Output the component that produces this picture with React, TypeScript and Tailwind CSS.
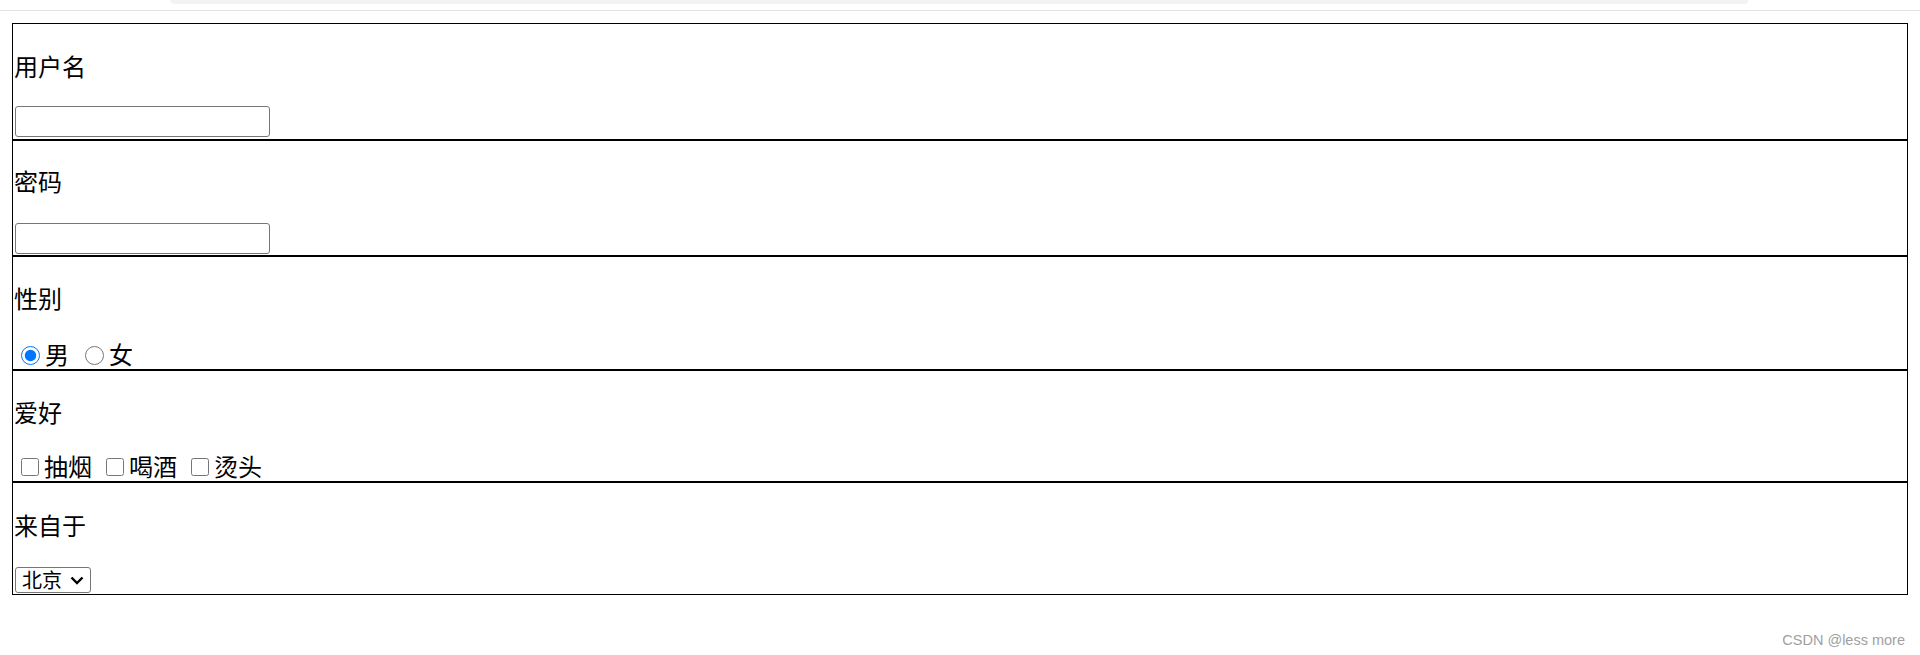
import React from "react";

const font = { fontFamily: '"Noto Sans CJK SC", "Microsoft YaHei", sans-serif' };

export default function App() {
  return (
    <div className="relative w-[1920px] h-[655px] bg-white overflow-hidden" style={font}>
      <div className="h-[11px] border-b border-[#e3e3e3] pl-[170px] pr-[172px]">
        <div className="h-[4px] bg-[#f1f3f4] rounded-b-[14px]" />
      </div>
      <div className="mt-[12px] mx-[12px] border border-black">
        <div className="flex flex-col h-[117px] border-b-2 border-black pl-[1px] pt-[26px]">
          <div className="leading-[32px] text-[24px] text-black">用户名</div>
          <input
            type="text"
            className="block mt-[24px] ml-[1px] w-[255px] h-[31px] border border-[#767676] rounded-[3px] bg-white outline-none"
          />
        </div>
        <div className="flex flex-col h-[116px] border-b-2 border-black pl-[1px] pt-[24px]">
          <div className="leading-[32px] text-[24px] text-black">密码</div>
          <input
            type="password"
            className="block mt-[26px] ml-[1px] w-[255px] h-[31px] border border-[#767676] rounded-[3px] bg-white outline-none"
          />
        </div>
        <div className="flex flex-col h-[114px] border-b-2 border-black pl-[1px] pt-[25px]">
          <div className="leading-[32px] text-[24px] text-black">性别</div>
          <div className="mt-[24px] flex items-center h-[31px] text-[24px] leading-[31px] text-black">
            <input type="radio" name="sex" defaultChecked className="w-[19px] h-[19px] ml-[7px] mr-[5px] mt-[3px] accent-[#0075ff]" />
            <span>男</span>
            <input type="radio" name="sex" className="w-[19px] h-[19px] ml-[16px] mr-[5px] mt-[3px]" />
            <span>女</span>
          </div>
        </div>
        <div className="flex flex-col h-[112px] border-b-2 border-black pl-[1px] pt-[25px]">
          <div className="leading-[32px] text-[24px] text-black">爱好</div>
          <div className="mt-[22px] flex items-center h-[31px] text-[24px] leading-[31px] text-black">
            <input type="checkbox" className="w-[18px] h-[18px] ml-[7px] mr-[5px] mt-[2px]" />
            <span>抽烟</span>
            <input type="checkbox" className="w-[18px] h-[18px] ml-[14px] mr-[5px] mt-[2px]" />
            <span>喝酒</span>
            <input type="checkbox" className="w-[18px] h-[18px] ml-[14px] mr-[5px] mt-[2px]" />
            <span>烫头</span>
          </div>
        </div>
        <div className="flex flex-col h-[111px] pl-[1px] pt-[26px]">
          <div className="leading-[32px] text-[24px] text-black">来自于</div>
          <div className="mt-[26px] ml-[1px] relative w-[76px] h-[26px]">
            <select
              defaultValue="北京"
              className="appearance-none w-[76px] h-[26px] border border-[#767676] rounded-[3px] bg-white pl-[6px] text-[20px] leading-[24px] text-black outline-none"
              style={font}
            >
              <option>北京</option>
              <option>上海</option>
              <option>广州</option>
            </select>
            <svg className="absolute right-[7px] top-[9px] pointer-events-none" width="14" height="9" viewBox="0 0 14 9">
              <path d="M1.5 1.5 L7 7 L12.5 1.5" fill="none" stroke="#000" strokeWidth="2.4" />
            </svg>
          </div>
        </div>
      </div>
      <div
        className="absolute right-[15px] top-[631px] text-[14.5px] leading-[18px] text-[#a0a0a0]"
        style={{ fontFamily: '"Liberation Sans", Arial, sans-serif' }}
      >
        CSDN @less more
      </div>
    </div>
  );
}
